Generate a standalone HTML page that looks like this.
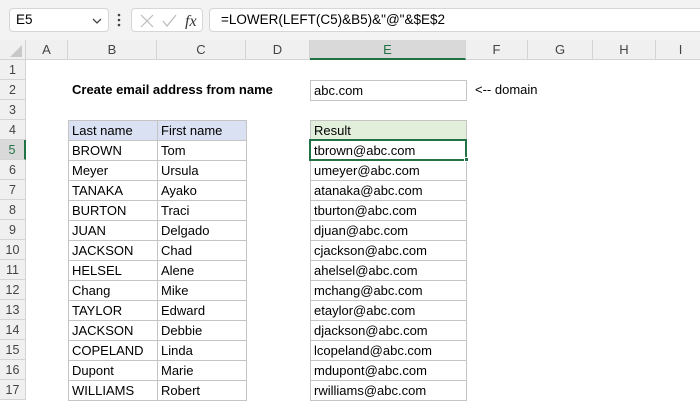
<!DOCTYPE html>
<html><head><meta charset="utf-8"><style>
*{margin:0;padding:0;box-sizing:border-box}
body{width:700px;height:400px;overflow:hidden;background:#fff;font-family:"Liberation Sans",sans-serif;font-size:13px;color:#000;position:relative}
.a{position:absolute}
.top{left:0;top:0;width:700px;height:40px;background:#f3f3f3}
.box{background:#fff;border:1px solid #d6d6d6;border-radius:4px}
.ch{top:40px;height:20px;background:#f0f0f0;border-right:1px solid #d4d4d4;border-bottom:1px solid #d4d4d4;text-align:center;line-height:20px;color:#444;font-size:13px}
.rh{left:0;width:26px;height:20px;background:#f0f0f0;border-bottom:1px solid #d4d4d4;border-right:1px solid #d4d4d4;text-align:center;line-height:20px;color:#444;font-size:12.5px}
.c{height:21px;border:1px solid #c4c4c4;line-height:19px;padding-left:3px;white-space:nowrap}
</style></head><body>
<div class="a top"></div>
<div class="a box" style="left:9px;top:8px;width:100px;height:24px;line-height:22px;padding-left:6px;font-size:13.5px">E5<svg class="a" style="left:82px;top:9px" width="10" height="6"><path d="M1 1l4 4 4-4" stroke="#444" stroke-width="1.3" fill="none"/></svg></div>
<svg class="a" style="left:117px;top:13px" width="4" height="14"><circle cx="2" cy="2" r="1.3" fill="#444"/><circle cx="2" cy="7" r="1.3" fill="#444"/><circle cx="2" cy="12" r="1.3" fill="#444"/></svg>
<div class="a box" style="left:131px;top:8px;width:72px;height:24px">
<svg class="a" style="left:7px;top:4px" width="62" height="16"><path d="M2 2l12 12M14 2L2 14" stroke="#bbb" stroke-width="1.2" fill="none"/><path d="M24 8l4 5 9-11" stroke="#bbb" stroke-width="1.2" fill="none"/><text x="46" y="13" font-family="Liberation Serif" font-style="italic" font-size="16" fill="#333">fx</text></svg></div>
<div class="a box" style="left:209px;top:8px;width:495px;height:24px;line-height:22px;padding-left:11px;font-size:13.5px">=LOWER(LEFT(C5)&amp;B5)&amp;"@"&amp;$E$2</div>
<div class="a" style="left:0;top:40px;width:26px;height:20px;background:#f0f0f0;border-right:1px solid #d4d4d4;border-bottom:1px solid #d4d4d4"><svg class="a" style="left:10px;top:5px" width="12" height="12"><path d="M12 0V12H0Z" fill="#c8c8c8"/></svg></div>
<div class="a ch" style="left:26px;width:42px">A</div>
<div class="a ch" style="left:68px;width:89px">B</div>
<div class="a ch" style="left:157px;width:89px">C</div>
<div class="a ch" style="left:246px;width:64px">D</div>
<div class="a ch" style="left:310px;width:156px;background:#d9d9d9;color:#217346;border-bottom:2px solid #217346">E</div>
<div class="a ch" style="left:466px;width:62px">F</div>
<div class="a ch" style="left:528px;width:65px">G</div>
<div class="a ch" style="left:593px;width:63px">H</div>
<div class="a ch" style="left:656px;width:50px">I</div>
<div class="a rh" style="top:60px">1</div><div class="a rh" style="top:80px">2</div><div class="a rh" style="top:100px">3</div><div class="a rh" style="top:120px">4</div>
<div class="a rh" style="top:140px;background:#d9d9d9;color:#217346;border-right:2px solid #217346">5</div>
<div class="a rh" style="top:160px">6</div><div class="a rh" style="top:180px">7</div><div class="a rh" style="top:200px">8</div><div class="a rh" style="top:220px">9</div><div class="a rh" style="top:240px">10</div><div class="a rh" style="top:260px">11</div><div class="a rh" style="top:280px">12</div><div class="a rh" style="top:300px">13</div><div class="a rh" style="top:320px">14</div><div class="a rh" style="top:340px">15</div><div class="a rh" style="top:360px">16</div><div class="a rh" style="top:380px">17</div>
<div class="a" style="left:72px;top:80px;line-height:20px;font-weight:bold">Create email address from name</div>
<div class="a c" style="left:310px;top:80px;width:157px">abc.com</div>
<div class="a" style="left:475px;top:80px;line-height:20px">&lt;-- domain</div>
<div class="a c" style="left:68px;top:120px;width:90px;background:#d9e1f2">Last name</div>
<div class="a c" style="left:157px;top:120px;width:90px;background:#d9e1f2">First name</div>
<div class="a c" style="left:310px;top:120px;width:157px;background:#e2efda">Result</div>
<div id="rows"></div>
<script>
var d=[["BROWN","Tom","tbrown"],["Meyer","Ursula","umeyer"],["TANAKA","Ayako","atanaka"],["BURTON","Traci","tburton"],["JUAN","Delgado","djuan"],["JACKSON","Chad","cjackson"],["HELSEL","Alene","ahelsel"],["Chang","Mike","mchang"],["TAYLOR","Edward","etaylor"],["JACKSON","Debbie","djackson"],["COPELAND","Linda","lcopeland"],["Dupont","Marie","mdupont"],["WILLIAMS","Robert","rwilliams"]];
var h="";d.forEach(function(r,i){var t=140+i*20;
h+='<div class="a c" style="left:68px;top:'+t+'px;width:90px">'+r[0]+'</div><div class="a c" style="left:157px;top:'+t+'px;width:90px">'+r[1]+'</div><div class="a c" style="left:310px;top:'+t+'px;width:157px">'+r[2]+'@abc.com</div>';});
h+='<div class="a" style="left:309px;top:139px;width:158px;height:22px;border:2px solid #217346"></div><div class="a" style="left:464px;top:157px;width:5px;height:5px;background:#217346;border:1px solid #fff"></div>';
document.getElementById("rows").innerHTML=h;
</script>
</body></html>
